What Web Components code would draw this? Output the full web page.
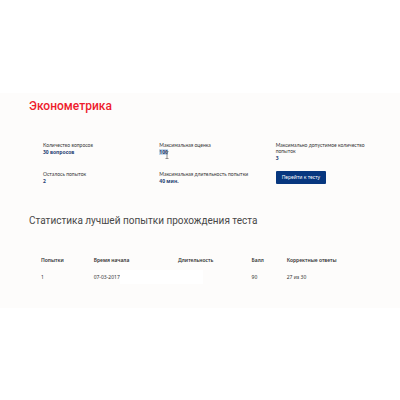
<!DOCTYPE html>
<html lang="ru">
<head>
<meta charset="utf-8">
<title>Эконометрика</title>
<style>
  body {
    margin: 0;
    padding-top: 93px;
    background: #fff;
    color: #333;
    font-family: "Noto Sans", sans-serif;
  }
</style>
</head>
<body>
<test-page>
  <span slot="title">Эконометрика</span>
  <test-facts slot="facts">
    <test-fact label="Количество вопросов">30 вопросов</test-fact>
    <test-fact label="Максимальная оценка"><selected-text>100</selected-text></test-fact>
    <test-fact label="Максимально допустимое количество попыток">3</test-fact>
    <test-fact label="Осталось попыток">2</test-fact>
    <test-fact label="Максимальная длительность попытки">40 мин.</test-fact>
    <start-button>Перейти к тесту</start-button>
  </test-facts>
  <span slot="subtitle">Статистика лучшей попытки прохождения теста</span>
  <attempt-table></attempt-table>
</test-page>

<script>
class TestPage extends HTMLElement {
  constructor() {
    super();
    let shadowDom = this.attachShadow({ mode: "open" });
    shadowDom.innerHTML = `
      <style>
      :host {
        display: block;
        background: #fdfcfb;
        padding: 5px 8px 24px 29px;
      }
      h1, h2 {
        margin: 0;
        font-family: Roboto, sans-serif;
        line-height: 16px;
      }
      h1 {
        color: #ee1c2e;
        font-size: 12px;
        font-weight: 500;
      }
      h2 {
        margin-top: 28px;
        color: #484848;
        font-size: 10px;
        font-weight: 400;
      }
      .facts {
        padding: 28px 0 0 14px;
      }
      .attempts {
        padding: 24px 0 0 12px;
      }
      </style>

      <h1><slot name="title"></slot></h1>
      <div class="facts"><slot name="facts"></slot></div>
      <h2><slot name="subtitle"></slot></h2>
      <div class="attempts"><slot></slot></div>
      `;
  }
}

class TestFacts extends HTMLElement {
  constructor() {
    super();
    let shadowDom = this.attachShadow({ mode: "open" });
    shadowDom.innerHTML = `
      <style>
      :host {
        display: grid;
        grid-template-columns: repeat(3, 1fr);
        row-gap: 9px;
      }
      </style>

      <slot></slot>
      `;
  }
}

class TestFact extends HTMLElement {
  constructor() {
    super();
    let shadowDom = this.attachShadow({ mode: "open" });
    shadowDom.innerHTML = `
      <style>
      :host {
        display: block;
        font-size: 5px;
        line-height: 6px;
      }
      dl, dd {
        margin: 0;
      }
      dt {
        max-width: 90px;
        font-family: Lato, sans-serif;
      }
      dd {
        color: #1d3c72;
        font-weight: 700;
        line-height: 8px;
      }
      </style>

      <dl>
        <dt>${this.getAttribute("label")}</dt>
        <dd><slot></slot></dd>
      </dl>
      `;
  }
}

class SelectedText extends HTMLElement {
  constructor() {
    super();
    let shadowDom = this.attachShadow({ mode: "open" });
    shadowDom.innerHTML = `
      <style>
      :host {
        display: inline-block;
        position: relative;
      }
      mark {
        background: #c5d8ea;
        color: inherit;
      }
      svg {
        position: absolute;
        right: -1px;
        top: 3px;
      }
      </style>

      <mark><slot></slot></mark>
      <svg width="4" height="8" viewBox="0 0 4 8" fill="none" stroke="#777" stroke-width="0.8">
        <path d="M0.5 0.5H3.5M2 0.5V7.5M0.5 7.5H3.5" />
      </svg>
      `;
  }
}

class StartButton extends HTMLElement {
  constructor() {
    super();
    let shadowDom = this.attachShadow({ mode: "open" });
    shadowDom.innerHTML = `
      <style>
      :host {
        display: block;
      }
      button {
        display: block;
        padding: 0 6px;
        border: 0;
        border-radius: 1px;
        background: #07377f;
        color: #fff;
        font: 400 5px/13px "Noto Sans", sans-serif;
      }
      </style>

      <button type="button"><slot></slot></button>
      `;
  }
}

class AttemptTable extends HTMLElement {
  constructor() {
    super();
    let shadowDom = this.attachShadow({ mode: "open" });
    shadowDom.innerHTML = `
      <style>
      :host {
        display: block;
      }
      table {
        width: 100%;
        border-collapse: collapse;
        table-layout: fixed;
        font-size: 5px;
        line-height: 14px;
      }
      th, td {
        padding: 0;
        text-align: left;
      }
      th {
        padding-bottom: 3px;
        font-weight: 600;
      }
      .number { width: 15%; }
      .start { width: 24%; }
      .duration { width: 21%; }
      .score { width: 10%; }
      .time {
        display: flex;
        margin-right: 49px;
      }
      .blank {
        flex: 1;
        background: #fff;
      }
      </style>

      <table>
        <thead>
          <tr>
            <th class="number">Попытки</th>
            <th class="start">Время начала</th>
            <th class="duration">Длительность</th>
            <th class="score">Балл</th>
            <th>Корректные ответы</th>
          </tr>
        </thead>
        <tbody>
          <tr>
            <td>1</td>
            <td colspan="2"><div class="time">07-03-2017<span class="blank"></span></div></td>
            <td>90</td>
            <td>27 из 30</td>
          </tr>
        </tbody>
      </table>
      `;
  }
}

customElements.define("test-page", TestPage);
customElements.define("test-facts", TestFacts);
customElements.define("test-fact", TestFact);
customElements.define("selected-text", SelectedText);
customElements.define("start-button", StartButton);
customElements.define("attempt-table", AttemptTable);
</script>
</body>
</html>
